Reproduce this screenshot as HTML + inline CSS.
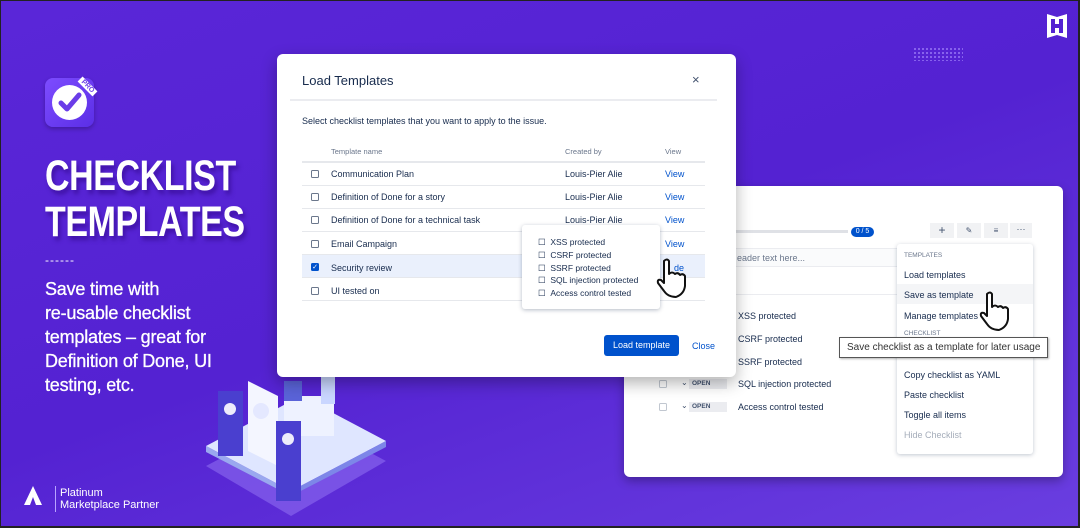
<!DOCTYPE html><html><head><style>
*{margin:0;padding:0;box-sizing:border-box}
body{width:1080px;height:528px;overflow:hidden;font-family:"Liberation Sans",sans-serif;background:#222}
#f{position:absolute;left:1px;top:1px;width:1077px;height:525px;background:linear-gradient(160deg,#5a26d8 0%,#5422d2 50%,#6a3ee0 100%);overflow:hidden}
.a{position:absolute}
.t{font-size:9px;color:#172b4d}
.v{color:#0052cc}
.row{position:absolute;left:301px;width:403px;height:23px;border-bottom:1px solid #e6e8ec}
.cb{position:absolute;width:8px;height:8px;border:1px solid #6b778c;border-radius:1.5px;background:#fff}
</style></head><body><div id="f">
<div class="a" style="left:44px;top:77px;width:49px;height:49px;border-radius:8px;background:linear-gradient(135deg,#7d4cff,#5b2ee6);box-shadow:0 2px 4px rgba(0,0,0,.25)"></div>
<div class="a" style="left:51px;top:84px;width:35px;height:35px;border-radius:50%;background:#fff"></div>
<svg class="a" style="left:51px;top:84px" width="35" height="35"><path d="M9 18 L15 24 L27 10" stroke="#6a3ce8" stroke-width="5" fill="none" stroke-linecap="round" stroke-linejoin="round"/></svg>
<div class="a" style="left:76px;top:82px;font-size:7px;font-weight:bold;color:#6a3ce8;background:#fff;padding:0 3px;transform:rotate(45deg)">PRO</div>
<div class="a" style="left:44px;top:152px;color:#fff;font-weight:bold;font-size:43px;line-height:46px;letter-spacing:-0.5px;transform:scaleX(.79);transform-origin:left;text-shadow:3px 4px 5px rgba(40,0,120,.5)">CHECKLIST<br>TEMPLATES</div>
<div class="a" style="left:44px;top:252px;color:#fff;font-size:12px;letter-spacing:1px">------</div>
<div class="a" style="left:44px;top:276px;color:#fff;font-size:18px;line-height:24px;letter-spacing:-0.2px;-webkit-text-stroke:0.3px #fff">Save time with<br>re-usable checklist<br>templates – great for<br>Definition of Done, UI<br>testing, etc.</div>
<svg class="a" style="left:21px;top:484px" width="22" height="24"><path d="M11 1 L2 20 L8 20 L11 12 L14 20 L20 20 Z" fill="#fff"/></svg>
<div class="a" style="left:54px;top:485px;width:1px;height:26px;background:#b9a3ff"></div>
<div class="a" style="left:59px;top:486px;color:#fff;font-size:11px;line-height:12px">Platinum<br>Marketplace Partner</div>
<svg class="a" style="left:1046px;top:13px" width="20" height="24"><path d="M0 0 L10 3 L20 0 L20 24 L10 21 L0 24 Z" fill="#fff"/><path d="M4 5 L4 19 L8 19 L8 14 L12 14 L12 19 L16 19 L16 5 L12 5 L12 10 L8 10 L8 5 Z" fill="#5422d2"/></svg>
<div class="a" style="left:912px;top:46px;width:50px;height:14px;background:radial-gradient(circle,#a98cff 0.8px,transparent 1px) 0 0/4px 4px;opacity:.8"></div>
<svg class="a" style="left:195px;top:355px" width="200" height="170">
<polygon points="10,110 105,60 190,105 95,160" fill="#8e6cf0" opacity=".6"/>
<polygon points="10,90 105,40 190,85 95,135" fill="#dfe6ff"/>
<polygon points="10,90 95,135 95,140 10,96" fill="#9aa8ef"/>
<polygon points="95,135 190,85 190,91 95,140" fill="#7d86e8"/>
<rect x="88" y="40" width="50" height="40" fill="#eef2ff"/>
<rect x="22" y="35" width="25" height="65" fill="#4a3fcf"/>
<circle cx="34" cy="53" r="6" fill="#fff" opacity=".9"/>
<polygon points="52,25 82,40 82,110 52,95" fill="#f4f6ff"/>
<circle cx="65" cy="55" r="8" fill="#e4e8ff"/>
<rect x="80" y="65" width="25" height="80" fill="#4a3fcf"/>
<circle cx="92" cy="83" r="6" fill="#fff" opacity=".9"/>
<rect x="88" y="25" width="18" height="20" fill="#5a63d8"/>
<rect x="125" y="20" width="14" height="28" fill="#c9d6ff"/>
<circle cx="132" cy="13" r="6" fill="#f0b28c"/><path d="M126 10 Q132 2 138 10 L138 18 L126 10Z" fill="#1b1b50"/>
</svg>
<div class="a" style="left:623px;top:185px;width:439px;height:291px;background:#fff;border-radius:6px;box-shadow:0 4px 10px rgba(0,0,0,.3)"></div>
<div class="a" style="left:735px;top:229px;width:112px;height:3px;background:#dfe1e6"></div>
<div class="a" style="left:850px;top:226px;width:23px;height:10px;background:#0052cc;border-radius:5px;color:#fff;font-size:7px;text-align:center;line-height:10px">0 / 5</div>
<div class="a" style="left:929px;top:222px;width:24px;height:15px;background:#f1f2f4;font-size:12px;text-align:center;line-height:14px;color:#42526e">+</div>
<div class="a" style="left:956px;top:222px;width:24px;height:15px;background:#f1f2f4;font-size:8px;text-align:center;line-height:15px;color:#42526e">✎</div>
<div class="a" style="left:983px;top:222px;width:24px;height:15px;background:#f1f2f4;font-size:8px;text-align:center;line-height:15px;color:#42526e">≡</div>
<div class="a" style="left:1009px;top:222px;width:22px;height:15px;background:#f1f2f4;font-size:9px;text-align:center;line-height:12px;color:#42526e">···</div>
<div class="a" style="left:734px;top:247px;width:163px;height:19px;background:#fafbfc;border:1px solid #ebecf0"></div>
<div class="a t" style="left:736px;top:252px;color:#6b778c">eader text here...</div>
<div class="a" style="left:734px;top:293px;width:163px;height:1px;background:#ebecf0"></div>
<div class="a t" style="left:737px;top:310px">XSS protected</div>
<div class="a t" style="left:737px;top:333px">CSRF protected</div>
<div class="a t" style="left:737px;top:356px">SSRF protected</div>
<div class="cb" style="left:658px;top:379px;border-color:#c1c7d0"></div><div class="a" style="left:680px;top:377px;font-size:8px;color:#42526e">⌄</div><div class="a" style="left:688px;top:378px;width:38px;height:10px;background:#ebecf0;font-size:6.5px;font-weight:bold;color:#42526e;padding-left:3px;line-height:10px">OPEN</div><div class="a t" style="left:737px;top:378px">SQL injection protected</div>
<div class="cb" style="left:658px;top:402px;border-color:#c1c7d0"></div><div class="a" style="left:680px;top:400px;font-size:8px;color:#42526e">⌄</div><div class="a" style="left:688px;top:401px;width:38px;height:10px;background:#ebecf0;font-size:6.5px;font-weight:bold;color:#42526e;padding-left:3px;line-height:10px">OPEN</div><div class="a t" style="left:737px;top:401px">Access control tested</div>
<div class="a" style="left:896px;top:243px;width:136px;height:210px;background:#fff;box-shadow:0 1px 4px rgba(9,30,66,.25);border-radius:3px"></div>
<div class="a" style="left:903px;top:251px;font-size:6.5px;color:#6b778c">TEMPLATES</div>
<div class="a t" style="left:903px;top:269px">Load templates</div>
<div class="a" style="left:896px;top:283px;width:136px;height:20px;background:#f4f5f7"></div>
<div class="a t" style="left:903px;top:289px">Save as template</div>
<div class="a t" style="left:903px;top:310px">Manage templates</div>
<div class="a" style="left:903px;top:329px;font-size:6.5px;color:#6b778c">CHECKLIST</div>
<div class="a t" style="left:903px;top:369px">Copy checklist as YAML</div>
<div class="a t" style="left:903px;top:389px">Paste checklist</div>
<div class="a t" style="left:903px;top:409px">Toggle all items</div>
<div class="a t" style="left:903px;top:429px;color:#a5adba">Hide Checklist</div>
<div class="a" style="left:838px;top:336px;width:209px;height:21px;background:#fff;border:1px solid #555;box-shadow:1px 1px 2px rgba(0,0,0,.3);font-size:10px;color:#333;line-height:19px;padding-left:7px">Save checklist as a template for later usage</div>
<div class="a" style="left:276px;top:53px;width:459px;height:323px;background:#fff;border-radius:6px;box-shadow:0 6px 16px rgba(0,0,0,.3)"></div>
<div class="a" style="left:301px;top:72px;font-size:13px;color:#172b4d">Load Templates</div>
<div class="a" style="left:691px;top:71px;font-size:13px;color:#42526e">×</div>
<div class="a" style="left:289px;top:98px;width:427px;height:2px;background:#ebecf0"></div>
<div class="a t" style="left:301px;top:115px">Select checklist templates that you want to apply to the issue.</div>
<div class="a" style="left:330px;top:146px;font-size:7.5px;color:#6b778c">Template name</div>
<div class="a" style="left:564px;top:146px;font-size:7.5px;color:#6b778c">Created by</div>
<div class="a" style="left:664px;top:146px;font-size:7.5px;color:#6b778c">View</div>
<div class="a" style="left:301px;top:160px;width:403px;height:2px;background:#e6e8ec"></div>
<div class="row" style="top:162px"></div><div class="row" style="top:185px"></div><div class="row" style="top:208px"></div><div class="row" style="top:231px"></div><div class="row" style="top:254px;background:#eaf0fc"></div><div class="row" style="top:277px"></div>
<div class="cb" style="left:310px;top:169px"></div><div class="a t" style="left:330px;top:168px">Communication Plan</div><div class="a t" style="left:564px;top:168px">Louis-Pier Alie</div><div class="a t v" style="left:664px;top:168px">View</div>
<div class="cb" style="left:310px;top:192px"></div><div class="a t" style="left:330px;top:191px">Definition of Done for a story</div><div class="a t" style="left:564px;top:191px">Louis-Pier Alie</div><div class="a t v" style="left:664px;top:191px">View</div>
<div class="cb" style="left:310px;top:215px"></div><div class="a t" style="left:330px;top:214px">Definition of Done for a technical task</div><div class="a t" style="left:564px;top:214px">Louis-Pier Alie</div><div class="a t v" style="left:664px;top:214px">View</div>
<div class="cb" style="left:310px;top:239px"></div><div class="a t" style="left:330px;top:238px">Email Campaign</div><div class="a t v" style="left:664px;top:238px">View</div>
<div class="cb" style="left:310px;top:262px;background:#0052cc;border-color:#0052cc;color:#fff;font-size:7px;line-height:7px;text-align:center">✓</div><div class="a t" style="left:330px;top:262px">Security review</div><div class="a t v" style="left:673px;top:262px">de</div>
<div class="cb" style="left:310px;top:286px"></div><div class="a t" style="left:330px;top:285px">UI tested on</div>
<div class="a" style="left:521px;top:224px;width:138px;height:84px;background:#fff;box-shadow:0 1px 4px rgba(9,30,66,.3);border-radius:3px"></div>
<div class="a" style="left:537px;top:235px;font-size:8.5px;line-height:12.8px;color:#172b4d">☐ &nbsp;XSS protected<br>☐ &nbsp;CSRF protected<br>☐ &nbsp;SSRF protected<br>☐ &nbsp;SQL injection protected<br>☐ &nbsp;Access control tested</div>
<div class="a" style="left:603px;top:334px;width:75px;height:21px;background:#0052cc;border-radius:3px;color:#fff;font-size:9px;text-align:center;line-height:21px">Load template</div>
<div class="a t v" style="left:691px;top:340px">Close</div>
<svg class="a" style="left:655px;top:257px" width="34" height="42"><path d="M8 3 Q11 0 13 3 L13 16 Q16 13 19 16 Q22 14 24 17 Q27 15 29 18 L29 28 Q28 36 20 39 Q12 39 8 33 L2 25 Q1 21 5 22 L8 25 Z" fill="#fff" stroke="#111" stroke-width="2" stroke-linejoin="round"/></svg>
<svg class="a" style="left:978px;top:290px" width="34" height="42"><path d="M8 3 Q11 0 13 3 L13 16 Q16 13 19 16 Q22 14 24 17 Q27 15 29 18 L29 28 Q28 36 20 39 Q12 39 8 33 L2 25 Q1 21 5 22 L8 25 Z" fill="#fff" stroke="#111" stroke-width="2" stroke-linejoin="round"/></svg>
</div></body></html>
